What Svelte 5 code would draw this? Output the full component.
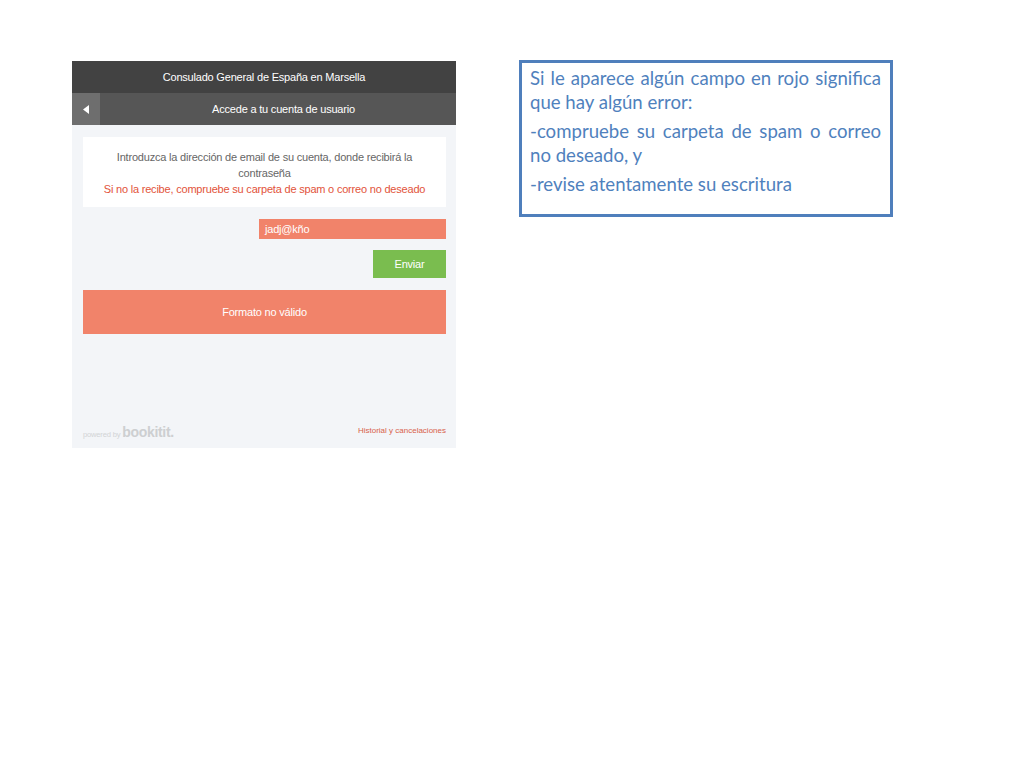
<script>
  let email = 'jadj@kño';
</script>

<div class="slide">
  <div class="widget">
    <div class="title">Consulado General de España en Marsella</div>
    <div class="subtitle">
      <div class="back">
        <svg width="6" height="9" viewBox="0 0 6 9"><path d="M6 0v9L0 4.5z" fill="#fff" /></svg>
      </div>
      <span>Accede a tu cuenta de usuario</span>
    </div>
    <div class="body">
      <div class="notice">
        <p>Introduzca la dirección de email de su cuenta, donde recibirá la contraseña</p>
        <p class="warn">Si no la recibe, compruebe su carpeta de spam o correo no deseado</p>
      </div>
      <div class="email">{email}</div>
      <div class="send">Enviar</div>
      <div class="error">Formato no válido</div>
      <div class="footer">
        <div class="powered">powered by <b>bookitit.</b></div>
        <span class="history">Historial y cancelaciones</span>
      </div>
    </div>
  </div>

  <div class="callout">
    <p>Si le aparece algún campo en rojo significa que hay algún error:</p>
    <p>-compruebe su carpeta de spam o correo no deseado, y</p>
    <p>-revise atentamente su escritura</p>
  </div>
</div>

<style>
  :global(body) {
    background: #fff;
  }

  .slide {
    width: 1024px;
    height: 768px;
    box-sizing: border-box;
    padding: 60px 0 0 72px;
    display: flex;
    align-items: flex-start;
    gap: 63px;
    overflow: hidden;
  }

  .widget {
    width: 384px;
    margin-top: 1px;
    font-family: "Liberation Sans", Arial, sans-serif;
    font-size: 11px;
    letter-spacing: -0.2px;
    color: #fff;
  }

  .title {
    height: 32px;
    line-height: 32px;
    background: #424242;
    text-align: center;
  }

  .subtitle {
    height: 32px;
    background: #565656;
    display: flex;
    align-items: center;
  }

  .subtitle span {
    flex: 1;
    text-align: center;
    padding-left: 11px;
  }

  .back {
    width: 28px;
    height: 100%;
    background: #6e6e6e;
    display: flex;
    align-items: center;
    justify-content: center;
  }

  .body {
    height: 323px;
    box-sizing: border-box;
    background: #f3f5f8;
    padding: 12px 10px 0 11px;
    display: flex;
    flex-direction: column;
    align-items: flex-end;
  }

  .notice {
    width: 100%;
    height: 70px;
    box-sizing: border-box;
    background: #fff;
    padding: 12px 20px 0;
    text-align: center;
    line-height: 16px;
    color: #666;
  }

  .notice p {
    margin: 0;
  }

  .notice .warn {
    margin: 0 -5px;
    color: #e2533a;
  }

  .email {
    width: 187px;
    height: 20px;
    box-sizing: border-box;
    margin-top: 12px;
    padding-left: 6px;
    line-height: 20px;
    background: #f1836a;
  }

  .send {
    width: 73px;
    height: 28px;
    margin-top: 11px;
    line-height: 29px;
    text-align: center;
    background: #7abd4f;
  }

  .error {
    width: 100%;
    height: 44px;
    margin-top: 12px;
    line-height: 44px;
    text-align: center;
    background: #f1836a;
  }

  .footer {
    width: 100%;
    margin-top: auto;
    padding-bottom: 5px;
    display: flex;
    justify-content: space-between;
    align-items: flex-end;
  }

  .powered {
    font-size: 7.6px;
    color: #d2d4d6;
    line-height: 16px;
  }

  .powered b {
    font-size: 14px;
    color: #cdcfd1;
    letter-spacing: -0.3px;
  }

  .history {
    font-size: 8px;
    letter-spacing: 0;
    line-height: 16px;
    padding-bottom: 4px;
    color: #d8614a;
  }

  .callout {
    width: 374px;
    height: 157px;
    box-sizing: border-box;
    border: 3px solid #4f7fbc;
    padding: 3px 9px 0 8px;
    font-family: Lato, "Noto Sans", sans-serif;
    font-size: 18.6px;
    line-height: 24px;
    color: #4f81bd;
    text-align: justify;
  }

  .callout p {
    margin: 0 0 4.8px;
  }
</style>
